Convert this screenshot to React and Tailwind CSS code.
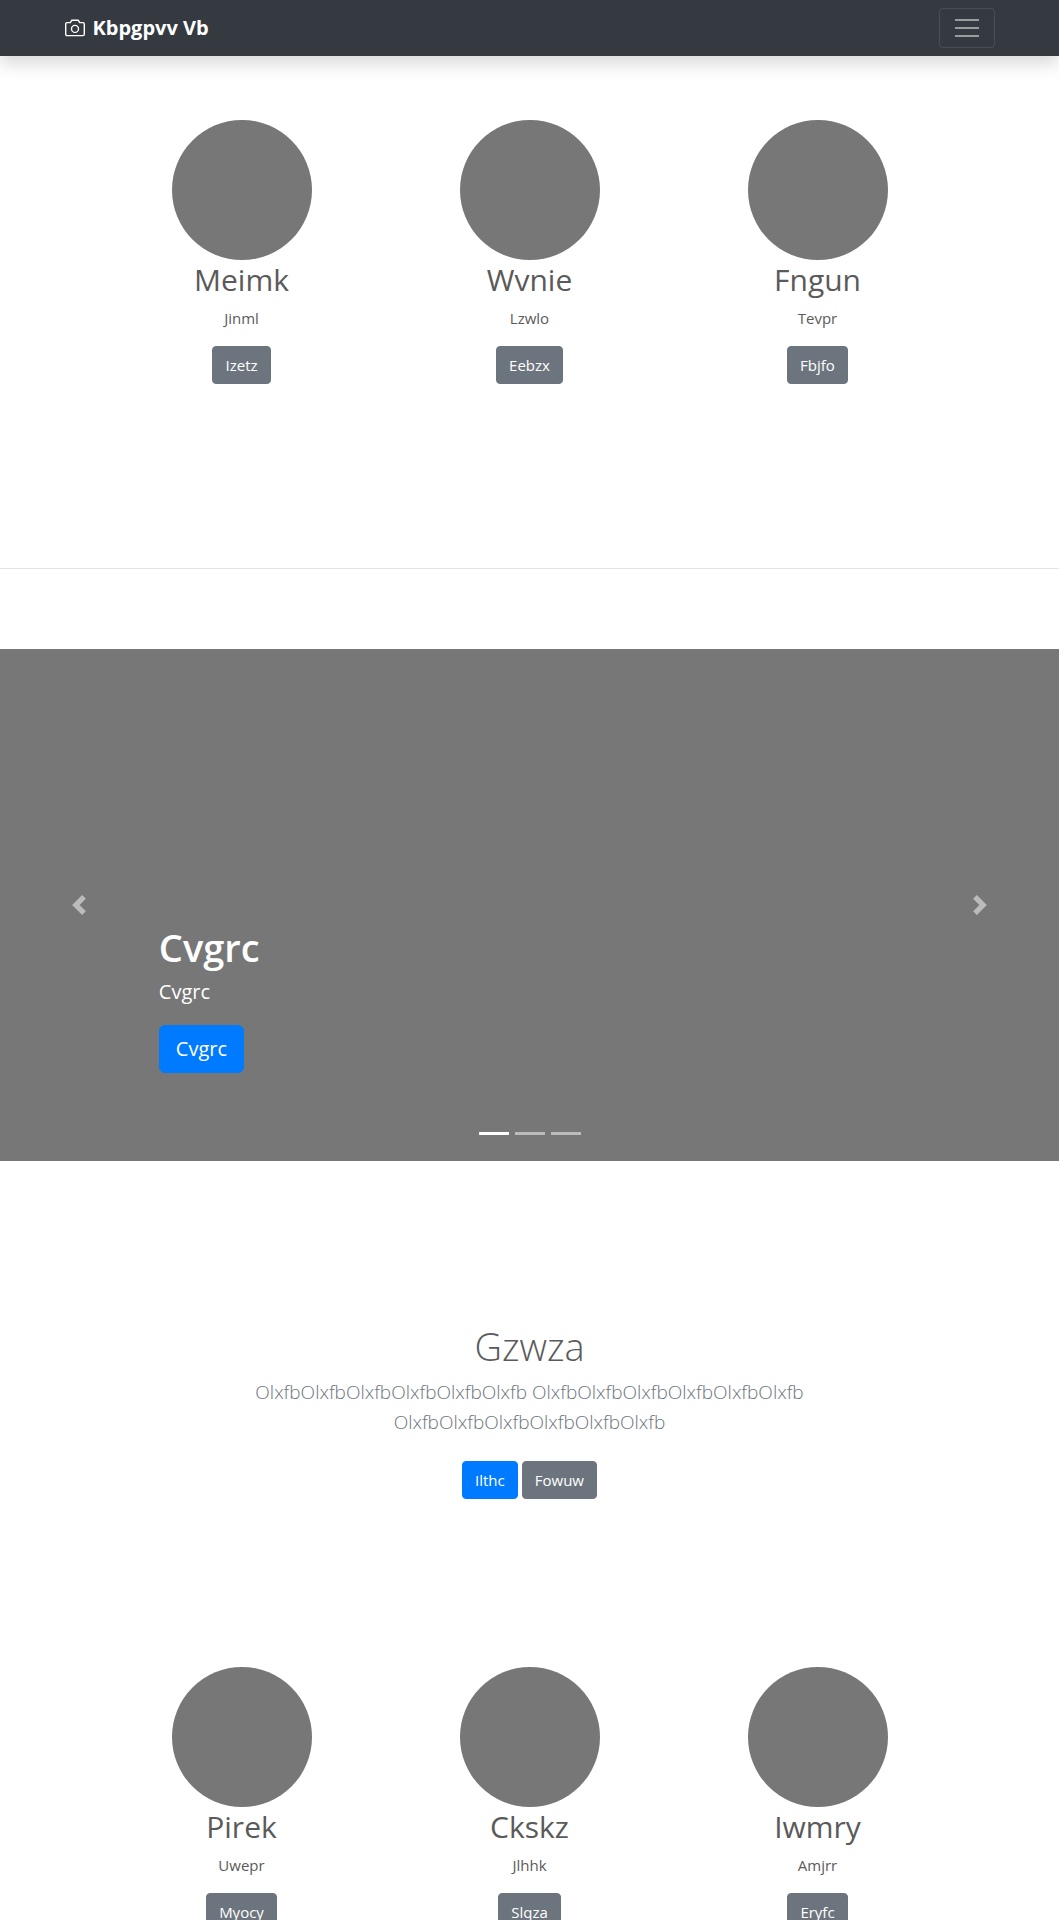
const topFeatures = [
  { title: "Meimk", text: "Jinml", action: "Izetz" },
  { title: "Wvnie", text: "Lzwlo", action: "Eebzx" },
  { title: "Fngun", text: "Tevpr", action: "Fbjfo" },
];

const bottomFeatures = [
  { title: "Pirek", text: "Uwepr", action: "Myocy" },
  { title: "Ckskz", text: "Jlhhk", action: "Slqza" },
  { title: "Iwmry", text: "Amjrr", action: "Eryfc" },
];

function CameraIcon() {
  return (
    <svg className="size-5" viewBox="0 0 20 20" fill="none" stroke="currentColor" strokeWidth="1.4" aria-hidden="true">
      <path d="M6.800 2.200h6.400l1.500 2.400h3.300a1.300 1.300 0 0 1 1.300 1.300v10.400a1.300 1.300 0 0 1-1.300 1.300H2A1.300 1.300 0 0 1 .7 16.300V5.900A1.300 1.300 0 0 1 2 4.600h3.300z" strokeLinejoin="round" />
      <circle cx="10" cy="10.900" r="3.500" />
    </svg>
  );
}

function Navbar() {
  return (
    <header className="bg-[#343a40] shadow-[0_8px_16px_rgba(0,0,0,0.15)]">
      <nav className="mx-auto flex h-14 max-w-[960px] items-center justify-between px-[15px]">
        <a href="#" className="flex items-center gap-2 text-[20px] leading-[30px] font-bold text-white">
          <CameraIcon />
          Kbpgpvv Vb
        </a>
        <button type="button" aria-label="Toggle navigation" className="flex h-10 w-14 flex-col items-center justify-center gap-1.5 rounded border border-white/10">
          <span className="h-0.5 w-6 bg-white/50" />
          <span className="h-0.5 w-6 bg-white/50" />
          <span className="h-0.5 w-6 bg-white/50" />
        </button>
      </nav>
    </header>
  );
}

function Button({ children, primary = false }) {
  return (
    <button
      type="button"
      className={`rounded border px-3 py-1.5 text-[15px] leading-6 text-white ${primary ? "border-[#007bff] bg-[#007bff]" : "border-[#6c757d] bg-[#6c757d]"}`}
    >
      {children}
    </button>
  );
}

function Features({ items }) {
  return (
    <section className="mx-auto grid max-w-[864px] grid-cols-3 text-center">
      {items.map((item) => (
        <article key={item.title} className="flex flex-col items-center">
          <div className="size-[140px] rounded-full bg-[#777]" />
          <h2 className="mb-1.5 text-[30px] leading-10">{item.title}</h2>
          <p className="mb-4 text-[15px] leading-6">{item.text}</p>
          <Button>{item.action}</Button>
        </article>
      ))}
    </section>
  );
}

function Carousel() {
  return (
    <section className="relative flex h-128 flex-col items-start justify-end bg-[#777] px-[15%] pb-22 text-white">
      <h1 className="mb-1.5 text-[38px] leading-12 font-semibold">Cvgrc</h1>
      <p className="mb-4.5 text-[20px] leading-[30px]">Cvgrc</p>
      <button type="button" className="rounded-md border border-[#007bff] bg-[#007bff] px-4 py-2 text-[20px] leading-[30px]">Cvgrc</button>
      <button type="button" aria-label="Previous" className="absolute inset-y-0 left-0 flex w-[15%] items-center justify-center opacity-50">
        <svg className="size-5" viewBox="0 0 8 8" fill="currentColor" aria-hidden="true">
          <path d="M5.25 0l-4 4 4 4 1.5-1.5-2.5-2.5 2.5-2.5-1.5-1.5z" />
        </svg>
      </button>
      <button type="button" aria-label="Next" className="absolute inset-y-0 right-0 flex w-[15%] items-center justify-center opacity-50">
        <svg className="size-5" viewBox="0 0 8 8" fill="currentColor" aria-hidden="true">
          <path d="M2.75 0l-1.5 1.5 2.5 2.5-2.5 2.5 1.5 1.5 4-4-4-4z" />
        </svg>
      </button>
      <div className="absolute inset-x-[15%] bottom-[26px] flex justify-center gap-1.5">
        <button type="button" aria-label="Slide 1" className="h-[3px] w-[30px] bg-white" />
        <button type="button" aria-label="Slide 2" className="h-[3px] w-[30px] bg-white/50" />
        <button type="button" aria-label="Slide 3" className="h-[3px] w-[30px] bg-white/50" />
      </div>
    </section>
  );
}

function Intro() {
  return (
    <section className="mx-auto max-w-[576px] text-center">
      <h1 className="mb-1.5 text-[38px] leading-[50px] font-light">Gzwza</h1>
      <p className="mb-6 text-[19px] leading-[30px] font-light text-[#6c757d]">
        OlxfbOlxfbOlxfbOlxfbOlxfbOlxfb OlxfbOlxfbOlxfbOlxfbOlxfbOlxfb OlxfbOlxfbOlxfbOlxfbOlxfbOlxfb
      </p>
      <div className="flex justify-center gap-1">
        <Button primary>Ilthc</Button>
        <Button>Fowuw</Button>
      </div>
    </section>
  );
}

export default function App() {
  return (
    <div className="bg-white font-['Open_Sans','Noto_Sans',sans-serif] text-[#5a5a5a]">
      <Navbar />
      <main className="pt-16">
        <Features items={topFeatures} />
        <hr className="mt-46 mb-20 border-black/10" />
        <Carousel />
        <div className="pt-40 pb-42">
          <Intro />
        </div>
        <Features items={bottomFeatures} />
      </main>
    </div>
  );
}
